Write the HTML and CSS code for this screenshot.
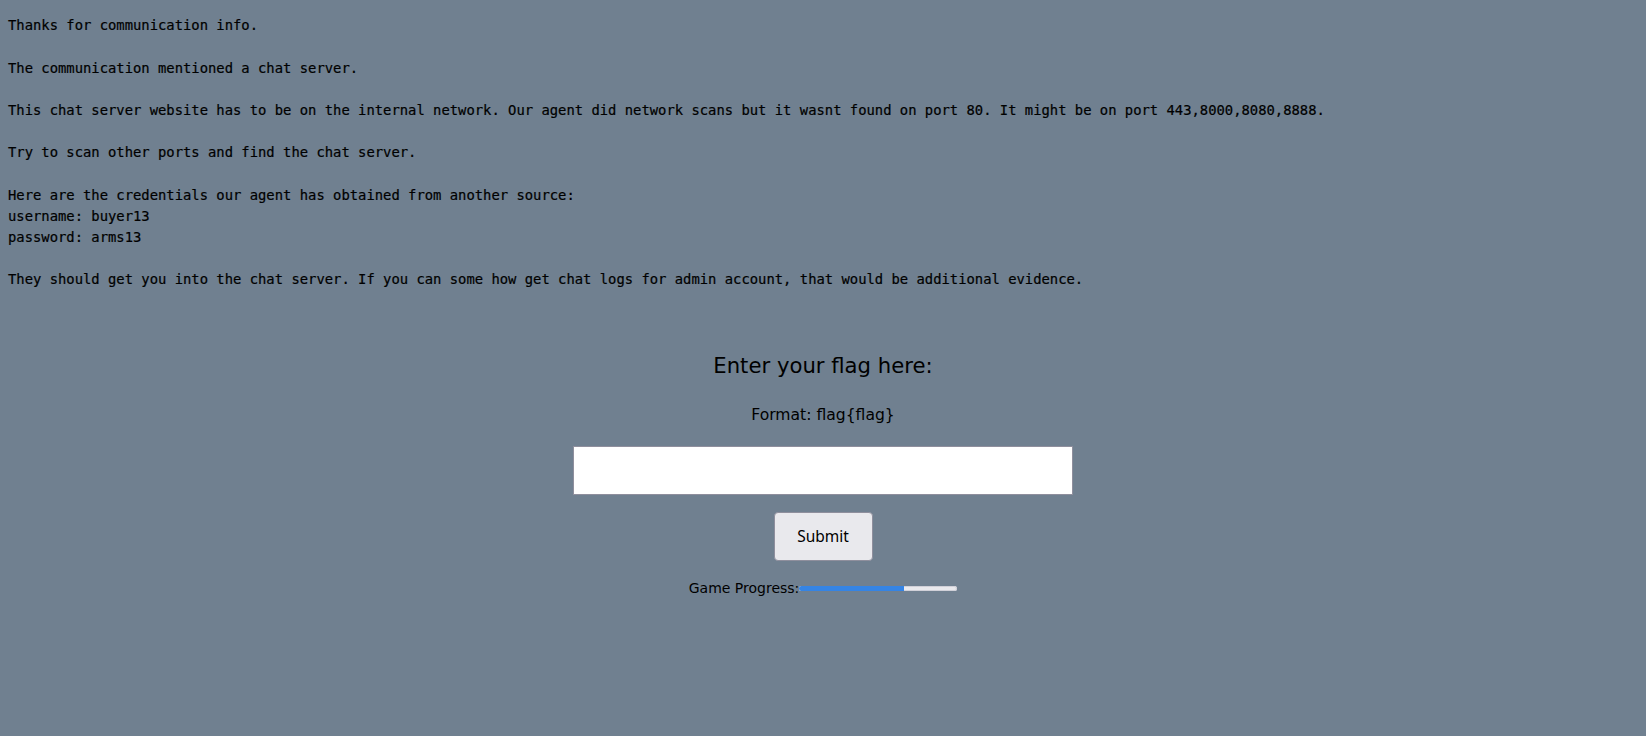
FILE: index.html
```html
<!DOCTYPE html>
<html lang="en">
<head>
<meta charset="utf-8">
<title>Flag</title>
<link rel="stylesheet" href="styles.css">
</head>
<body>
<pre class="message">Thanks for communication info.

The communication mentioned a chat server.

This chat server website has to be on the internal network. Our agent did network scans but it wasnt found on port 80. It might be on port 443,8000,8080,8888.

Try to scan other ports and find the chat server.

Here are the credentials our agent has obtained from another source:
username: buyer13
password: arms13

They should get you into the chat server. If you can some how get chat logs for admin account, that would be additional evidence.</pre>
<form class="flag-form" onsubmit="return false;">
  <h2 class="flag-title">Enter your flag here:</h2>
  <p class="flag-format">Format: flag{flag}</p>
  <input class="flag-input" type="text" name="flag" aria-label="Flag">
  <button class="flag-submit" type="submit">Submit</button>
  <div class="progress-row">
    <span class="progress-label">Game Progress:</span>
    <div class="progress-track" role="progressbar" aria-valuenow="66" aria-valuemin="0" aria-valuemax="100">
      <div class="progress-fill" style="width: 66.5%"></div>
    </div>
  </div>
</form>
</body>
</html>
```
FILE: styles.css
```css
html, body {
  margin: 0;
  padding: 0;
}

body {
  background: #708090;
  color: #000;
  font-family: "DejaVu Sans", sans-serif;
  width: 1646px;
  height: 736px;
  overflow: hidden;
}

.message {
  margin: 0;
  padding: 15.4px 8px 0;
  font-family: "DejaVu Sans Mono", monospace;
  font-size: 13.85px;
  line-height: 21.17px;
  white-space: pre;
  color: #000;
  -webkit-text-stroke: 0.2px #000;
}

.flag-form {
  display: flex;
  flex-direction: column;
  align-items: center;
  margin-top: 63px;
}

.flag-title {
  margin: 0;
  font-family: "DejaVu Sans", sans-serif;
  font-weight: normal;
  font-size: 21.2px;
  line-height: 24.4px;
  color: #000;
}

.flag-format {
  margin: 27.6px 0 0;
  font-size: 15.6px;
  line-height: 18px;
}

.flag-input {
  margin-top: 22px;
  box-sizing: border-box;
  width: 500px;
  height: 49px;
  border: 1px solid #8f8f9d;
  background: #fff;
  padding: 0 10px;
  font-size: 16px;
  outline: none;
}

.flag-submit {
  margin-top: 17.5px;
  box-sizing: border-box;
  width: 99px;
  height: 48.5px;
  background: #e9e9ed;
  border: 1px solid #8f8f9d;
  border-radius: 4px;
  font-family: "Noto Sans", sans-serif;
  font-size: 15.5px;
  color: #000;
  padding: 0;
}

.progress-row {
  margin-top: 19.8px;
  display: flex;
  align-items: center;
}

.progress-label {
  font-size: 14px;
  line-height: 16.3px;
}

.progress-track {
  width: 158px;
  height: 5px;
  background: #e9e9ed;
  box-shadow: inset 0 0 0 1px #d0d0d8;
  border-radius: 3px;
  overflow: hidden;
  display: flex;
}

.progress-fill {
  height: 100%;
  background: #3584e4;
}
```
